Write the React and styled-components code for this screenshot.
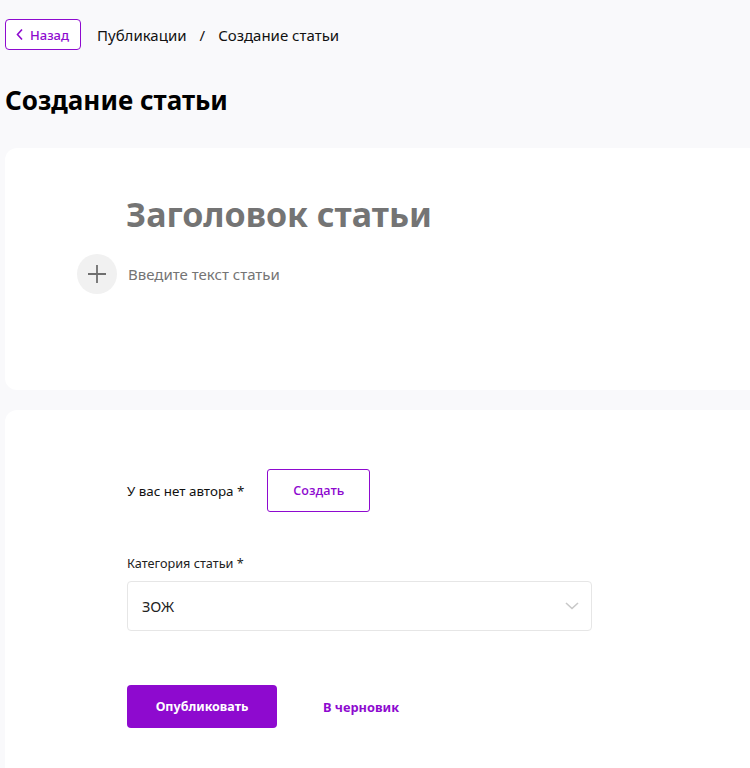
import React from 'react';
import styled, { createGlobalStyle } from 'styled-components';

const GlobalStyle = createGlobalStyle`
    html, body {
        margin: 0;
        padding: 0;
        background: #f9f9fb;
        overflow-x: hidden;
    }
    body {
        font-family: "Noto Sans", "Open Sans", sans-serif;
        color: #111;
    }
`;

const Page = styled.div`
    padding: 19px 0 0 5px;
    display: flex;
    flex-direction: column;
`;

const TopBar = styled.div`
    display: flex;
    align-items: center;
    gap: 16px;
`;

const BackButton = styled.button`
    display: flex;
    align-items: center;
    gap: 6px;
    height: 31px;
    padding: 0 11px 0 9px;
    background: #fff;
    border: 1px solid #8e0acf;
    border-radius: 4px;
    color: #8e0acf;
    font-family: inherit;
    font-size: 13px;
    font-weight: 500;
    cursor: pointer;
`;

const Crumbs = styled.div`
    display: flex;
    align-items: center;
    gap: 13px;
    font-size: 15px;
    color: #111;
`;

const PageTitle = styled.h1`
    margin: 34px 0 0;
    font-size: 26px;
    font-weight: 700;
    line-height: 32px;
    color: #000;
`;

const Card = styled.section`
    background: #fff;
    border-radius: 12px;
    margin-right: -20px;
    margin-top: ${p => p.$top}px;
    min-height: ${p => p.$height}px;
    padding: ${p => p.$pad};
    box-sizing: border-box;
    display: flex;
    flex-direction: column;
`;

const ArticleTitle = styled.div`
    font-size: 34px;
    font-weight: 700;
    line-height: 44px;
    color: #747474;
`;

const EditorRow = styled.div`
    display: flex;
    align-items: center;
    gap: 11px;
    margin: 18px 0 0 -49px;
`;

const PlusButton = styled.button`
    width: 40px;
    height: 40px;
    border-radius: 50%;
    border: none;
    background: #f1f1f1;
    display: flex;
    align-items: center;
    justify-content: center;
    padding: 0;
`;

const Placeholder = styled.span`
    font-size: 15px;
    color: #747474;
`;

const AuthorRow = styled.div`
    display: flex;
    align-items: center;
    gap: 23px;
    font-size: 13.4px;
    color: #111;
`;

const OutlineButton = styled.button`
    width: 103px;
    height: 43px;
    background: #fff;
    border: 1px solid #8e0acf;
    border-radius: 3px;
    color: #8e0acf;
    font-family: "Open Sans", "Noto Sans", sans-serif;
    font-size: 12.5px;
    font-weight: 600;
`;

const Label = styled.div`
    margin-top: 42px;
    font-size: 12.7px;
    color: #222;
`;

const Select = styled.div`
    margin-top: 9px;
    width: 465px;
    height: 50px;
    box-sizing: border-box;
    border: 1px solid #e6e6e6;
    border-radius: 4px;
    display: flex;
    align-items: center;
    justify-content: space-between;
    padding: 0 12px 0 14px;
    font-size: 14.5px;
    color: #222;
`;

const Actions = styled.div`
    display: flex;
    align-items: center;
    gap: 46px;
    margin-top: 54px;
`;

const PrimaryButton = styled.button`
    width: 150px;
    height: 43px;
    border: none;
    border-radius: 4px;
    background: #8e0acf;
    color: #fff;
    font-family: inherit;
    font-size: 12.5px;
    font-weight: 700;
`;

const LinkButton = styled.button`
    border: none;
    background: none;
    padding: 0;
    color: #8e0acf;
    font-family: inherit;
    font-size: 12.8px;
    font-weight: 700;
`;

export default function App() {
    return (
        <>
            <GlobalStyle />
            <Page>
                <TopBar>
                    <BackButton>
                        <svg width="9" height="13" viewBox="0 0 9 13" fill="none">
                            <path d="M7 1.5L2.5 6.5L7 11.5" stroke="#8e0acf" strokeWidth="1.6" />
                        </svg>
                        Назад
                    </BackButton>
                    <Crumbs>
                        <span>Публикации</span>
                        <span>/</span>
                        <span>Создание статьи</span>
                    </Crumbs>
                </TopBar>
                <PageTitle>Создание статьи</PageTitle>

                <Card $top={32} $height={242} $pad="44px 0 0 121px">
                    <ArticleTitle>Заголовок статьи</ArticleTitle>
                    <EditorRow>
                        <PlusButton>
                            <svg width="20" height="20" viewBox="0 0 20 20">
                                <path d="M10 1v18M1 10h18" stroke="#6f6f6f" strokeWidth="1.8" />
                            </svg>
                        </PlusButton>
                        <Placeholder>Введите текст статьи</Placeholder>
                    </EditorRow>
                </Card>

                <Card $top={20} $height={380} $pad="59px 0 40px 122px">
                    <AuthorRow>
                        <span>У вас нет автора *</span>
                        <OutlineButton>Создать</OutlineButton>
                    </AuthorRow>
                    <Label>Категория статьи *</Label>
                    <Select>
                        <span>ЗОЖ</span>
                        <svg width="14" height="8" viewBox="0 0 14 8" fill="none">
                            <path d="M1 1l6 5.5L13 1" stroke="#c8c8c8" strokeWidth="1.6" />
                        </svg>
                    </Select>
                    <Actions>
                        <PrimaryButton>Опубликовать</PrimaryButton>
                        <LinkButton>В черновик</LinkButton>
                    </Actions>
                </Card>
            </Page>
        </>
    );
}
